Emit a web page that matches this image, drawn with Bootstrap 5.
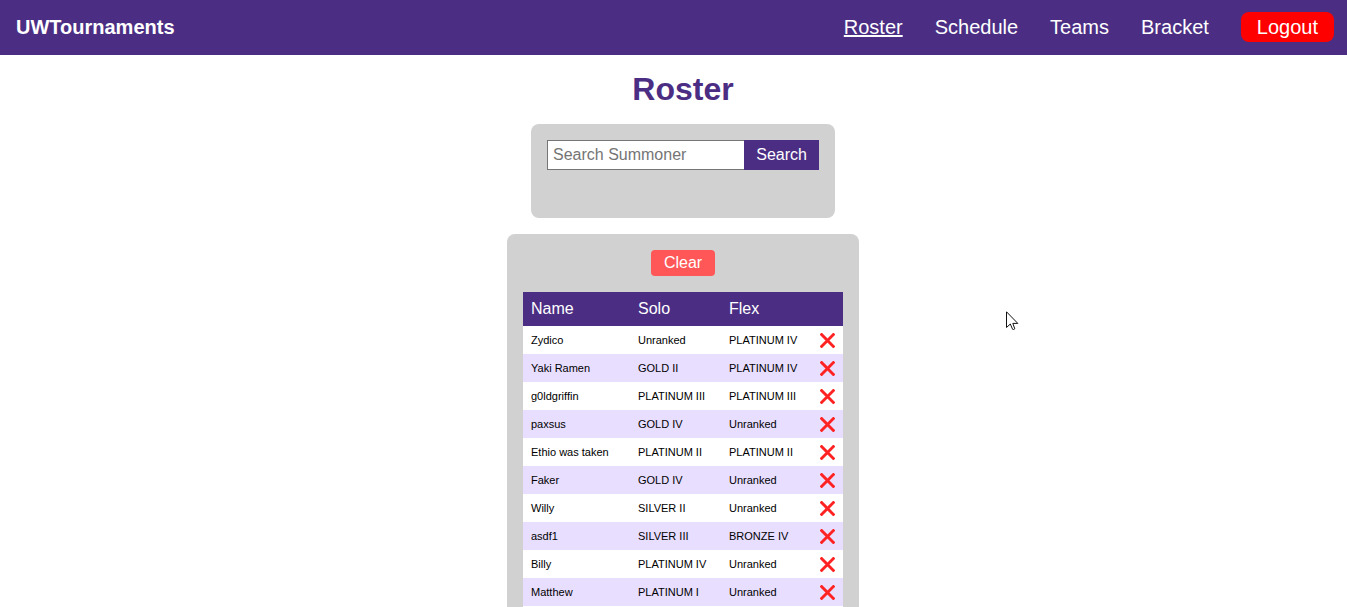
<!DOCTYPE html>
<html lang="en">
<head>
<meta charset="utf-8">
<meta name="viewport" content="width=device-width, initial-scale=1">
<title>UWTournaments - Roster</title>
<link href="https://cdn.jsdelivr.net/npm/bootstrap@5.3.0/dist/css/bootstrap.min.css" rel="stylesheet">
<style>
  :root { --uw-purple: #4b2e83; --uw-panel: #d1d1d1; --uw-stripe: #e8deff; }
  body { font-family: "Liberation Sans", Arial, sans-serif; color: #000; }
  .site-bar { background: var(--uw-purple); padding: 12px 13px 13px 16px; font-size: 20px; line-height: 30px; }
  .site-bar a { color: #fff; text-decoration: none; }
  .site-bar a.active { text-decoration: underline; }
  .site-links { gap: 12px 32px; }
  .logout { background: #f00; color: #fff; border-radius: 8px; font-size: 20px; line-height: 30px; }
  .page { padding-left: 19px; gap: 16px; }
  .page-title { color: var(--uw-purple); font-size: 32px; font-weight: 700; line-height: 37px; }
  .panel { background: var(--uw-panel); border-radius: 8px; padding: 16px; max-width: 100%; }
  .search-panel { width: 304px; padding-bottom: 48px; }
  .search-field { border: 1px solid #767676; border-right: 0; border-radius: 0; padding: 0 5px; height: 30px; line-height: 28px; color: #000; }
  .search-field::placeholder { color: #757575; }
  .search-button { background: var(--uw-purple); color: #fff; line-height: 30px; padding: 0 12px; }
  .roster-panel { width: 352px; padding-bottom: 0; border-bottom-left-radius: 0; border-bottom-right-radius: 0; }
  .clear-button { background: #ff5757; color: #fff; border-radius: 4px; line-height: 26px; padding: 0 13px; }
  .roster { table-layout: fixed; font-size: 11px; line-height: 28px; border-bottom: 1px solid #fff; }
  .roster th, .roster td { padding: 0 0 0 8px; white-space: nowrap; }
  .roster thead { background: var(--uw-purple); color: #fff; font-size: 16px; line-height: 34px; }
  .roster th { font-weight: 400; }
  .roster tbody tr { background: #fff; }
  .roster tbody tr:nth-child(even) { background: var(--uw-stripe); }
  .name-col { width: 107px; }
  .rank-col { width: 91px; }
  .remove { width: 15px; height: 28px; }
  .pointer { position: fixed; left: 1006px; top: 311px; pointer-events: none; }
</style>
</head>
<body class="vh-100 overflow-hidden d-flex flex-column">
<svg class="d-none" aria-hidden="true">
  <symbol id="cross" viewBox="0 0 16 16"><path d="M1.7 1.7L14.3 14.3M14.3 1.7L1.7 14.3" fill="none" stroke="#ff2222" stroke-width="3.1" stroke-linecap="square"/></symbol>
</svg>
<header class="site-bar d-flex flex-wrap justify-content-between align-items-center">
  <a class="fw-bold" href="#">UWTournaments</a>
  <nav class="site-links d-flex flex-wrap align-items-center">
    <a class="active" aria-current="page" href="#">Roster</a>
    <a href="#">Schedule</a>
    <a href="#">Teams</a>
    <a href="#">Bracket</a>
    <button type="button" class="logout border-0 py-0 px-3">Logout</button>
  </nav>
</header>
<main class="page d-flex flex-column align-items-center flex-grow-1 pt-3">
  <h1 class="page-title m-0">Roster</h1>
  <form class="panel search-panel d-flex" onsubmit="return false">
    <input class="search-field flex-grow-1 w-100" type="text" placeholder="Search Summoner" aria-label="Search Summoner">
    <button class="search-button border-0" type="submit">Search</button>
  </form>
  <section class="panel roster-panel flex-grow-1 d-flex flex-column align-items-center gap-3">
    <button type="button" class="clear-button border-0">Clear</button>
    <table class="roster w-100">
      <colgroup><col class="name-col"><col class="rank-col"><col class="rank-col"><col></colgroup>
      <thead><tr><th scope="col">Name</th><th scope="col">Solo</th><th scope="col">Flex</th><th scope="col" aria-label="Remove"></th></tr></thead>
      <tbody id="players"></tbody>
    </table>
  </section>
</main>
<svg class="pointer" width="13" height="20" viewBox="0 0 13 20" aria-hidden="true"><path d="M.5 .8V16.5L4.3 13L6.6 18.3Q7.5 19 8.8 17.8L6.8 12.4H11.8Z" fill="#fff" stroke="#111" stroke-width="1"/></svg>
<script>
  const players = [
    ["Zydico", "Unranked", "PLATINUM IV"],
    ["Yaki Ramen", "GOLD II", "PLATINUM IV"],
    ["g0ldgriffin", "PLATINUM III", "PLATINUM III"],
    ["paxsus", "GOLD IV", "Unranked"],
    ["Ethio was taken", "PLATINUM II", "PLATINUM II"],
    ["Faker", "GOLD IV", "Unranked"],
    ["Willy", "SILVER II", "Unranked"],
    ["asdf1", "SILVER III", "BRONZE IV"],
    ["Billy", "PLATINUM IV", "Unranked"],
    ["Matthew", "PLATINUM I", "Unranked"]
  ];
  document.getElementById("players").innerHTML = players.map(([name, solo, flex]) =>
    `<tr><td>${name}</td><td>${solo}</td><td>${flex}</td><td><button type="button" class="remove d-flex align-items-center p-0 border-0 bg-transparent" aria-label="Remove ${name}"><svg width="15" height="15"><use href="#cross"/></svg></button></td></tr>`
  ).join("");
</script>
<script src="https://cdn.jsdelivr.net/npm/bootstrap@5.3.0/dist/js/bootstrap.bundle.min.js"></script>
</body>
</html>
